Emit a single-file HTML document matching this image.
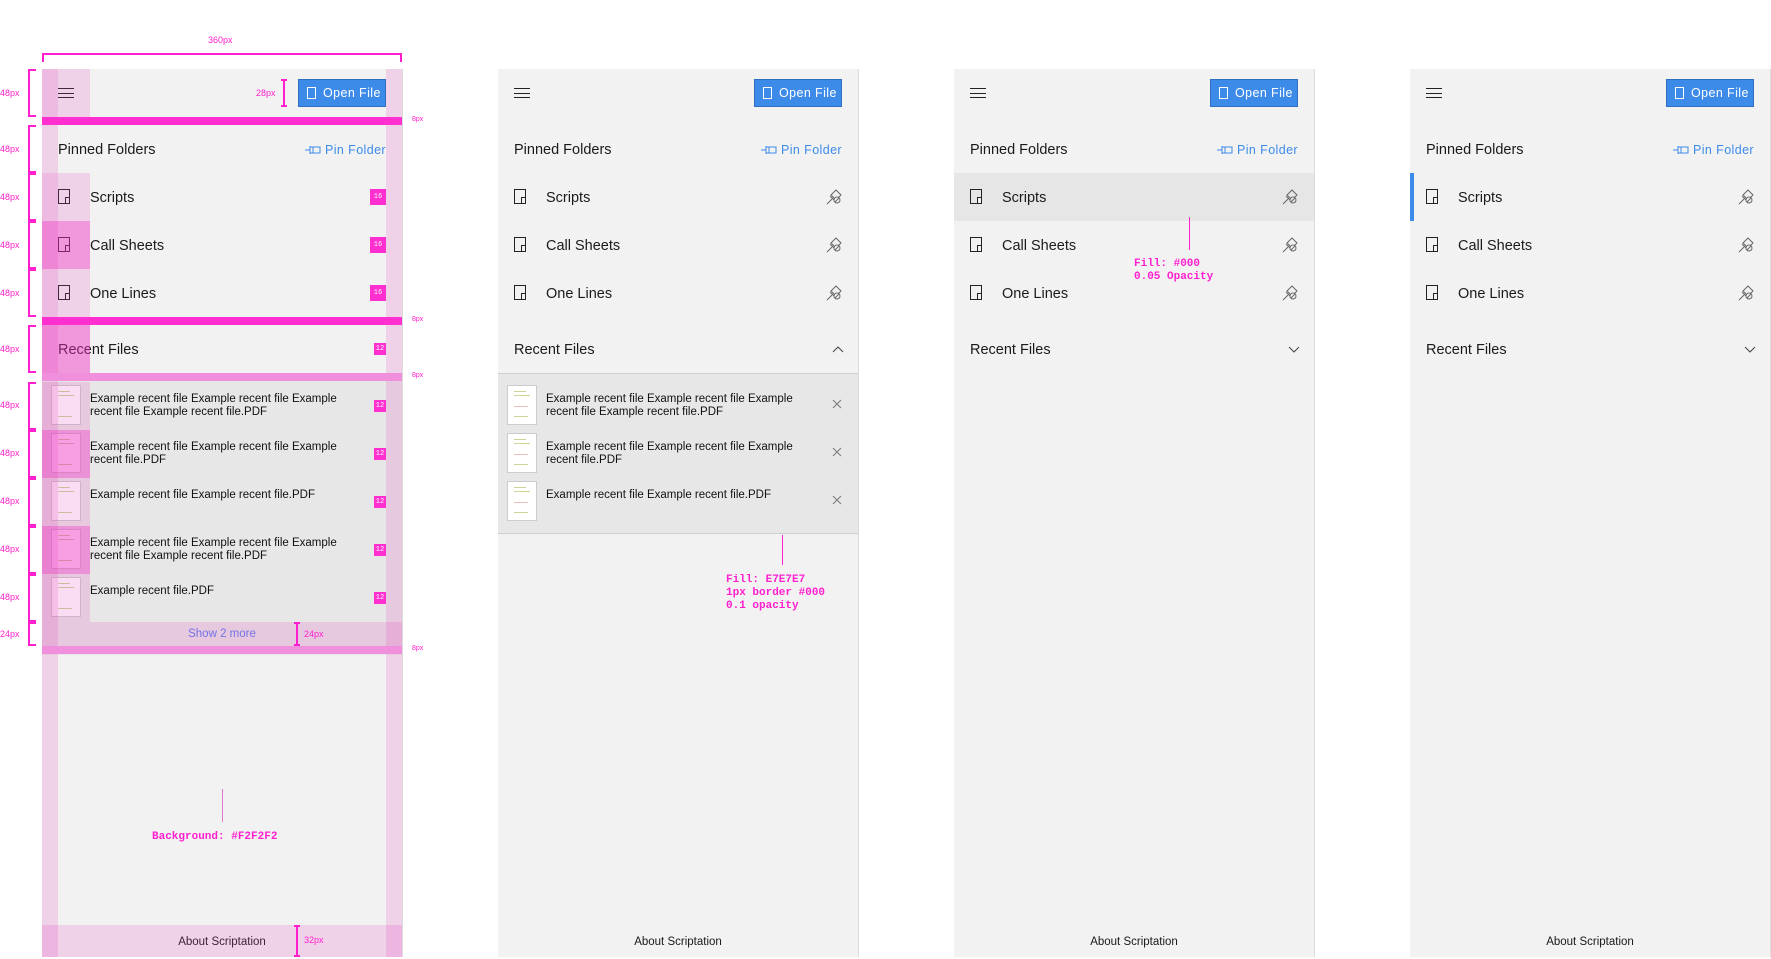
<!DOCTYPE html>
<html><head><meta charset="utf-8"><style>
*{margin:0;padding:0;box-sizing:border-box}
body{width:1771px;height:957px;background:#fff;position:relative;overflow:hidden;font-family:"Liberation Sans",sans-serif;color:#1a1a1a}
.p{position:absolute;top:69px;width:361px;height:888px;background:#f2f2f2;border-right:1px solid #dcdcdc}
.a{position:absolute}
.ham{left:16px;top:19px;width:16px;height:10px;border-top:1px solid #222;border-bottom:1px solid #222}
.ham:after{content:"";position:absolute;left:0;top:3.5px;width:16px;height:1px;background:#222}
.btn{left:256px;top:10px;width:88px;height:28px;background:#3d8be8;border:1px solid #2f6fc0;color:#fff;font-size:12.5px;letter-spacing:.4px;line-height:27px;padding-left:24px}
.btn i{position:absolute;left:8px;top:7px;width:9px;height:12px;border:1px solid #fff}
.h{left:16px;font-size:14.5px;line-height:50px}
.pin{right:16px;top:56px;line-height:50px;font-size:12.5px;color:#3d8be8;letter-spacing:.4px}
.pin svg{vertical-align:-1px;margin-right:4px}
.row{left:0;width:360px;height:48px}
.row .fi{position:absolute;left:16px;top:16px;width:12px;height:15px;border:1px solid #222}
.row .fi:after{content:"";position:absolute;right:-1px;bottom:-1px;width:3px;height:5px;border:1px solid #222;background:#f2f2f2}
.row span{position:absolute;left:48px;line-height:50px;font-size:14.5px}
.row svg{position:absolute;right:16px;top:16px}
.list{left:0;top:304px;width:360px;background:#e7e7e7;border-top:1px solid rgba(0,0,0,.1);border-bottom:1px solid rgba(0,0,0,.1)}
.fr{position:relative;height:48px}
.th{position:absolute;left:9px;top:4px;width:30px;height:40px;background:#fff;border:1px solid #ccc}
.th b{position:absolute;left:6px;height:1px;background:#c8d89a}
.fr p{position:absolute;left:48px;top:12px;width:250px;font-size:11.5px;line-height:13px;color:#111}
.fr .x{position:absolute;right:16px;top:18px}
.foot{left:0;top:856px;width:360px;height:32px;line-height:34px;text-align:center;font-size:11.5px}
.ann{position:absolute;font-family:"Liberation Mono",monospace;font-weight:bold;color:#ff1fcf;font-size:11px;line-height:13px}
.lbl{position:absolute;font-size:9px;color:#ff1fcf;}
.br{position:absolute;left:28px;width:8px;border:2px solid #ff1fcf;border-right:none}
.ov{position:absolute}
.bd{position:absolute;background:#ff2fd0;color:#fff;font-size:7px;text-align:center;font-family:"Liberation Mono",monospace}
</style></head><body>

<div class="lbl" style="left:208px;top:35px">360px</div>
<div class="ov" style="left:42px;top:53px;width:360px;height:9px;border:2px solid #ff1fcf;border-bottom:none"></div>
<div class="lbl" style="left:0;top:88px">48px</div>
<div class="lbl" style="left:0;top:144px">48px</div>
<div class="lbl" style="left:0;top:192px">48px</div>
<div class="lbl" style="left:0;top:240px">48px</div>
<div class="lbl" style="left:0;top:288px">48px</div>
<div class="lbl" style="left:0;top:344px">48px</div>
<div class="lbl" style="left:0;top:400px">48px</div>
<div class="lbl" style="left:0;top:448px">48px</div>
<div class="lbl" style="left:0;top:496px">48px</div>
<div class="lbl" style="left:0;top:544px">48px</div>
<div class="lbl" style="left:0;top:592px">48px</div>
<div class="lbl" style="left:0;top:629px">24px</div>
<div class="br" style="top:69px;height:48px"></div>
<div class="br" style="top:125px;height:48px"></div>
<div class="br" style="top:173px;height:48px"></div>
<div class="br" style="top:221px;height:48px"></div>
<div class="br" style="top:269px;height:48px"></div>
<div class="br" style="top:325px;height:48px"></div>
<div class="br" style="top:382px;height:48px"></div>
<div class="br" style="top:430px;height:48px"></div>
<div class="br" style="top:478px;height:48px"></div>
<div class="br" style="top:526px;height:48px"></div>
<div class="br" style="top:574px;height:48px"></div>
<div class="br" style="top:622px;height:24px"></div>
<div class="lbl" style="left:412px;top:116px;font-size:7px">8px</div>
<div class="lbl" style="left:412px;top:316px;font-size:7px">8px</div>
<div class="lbl" style="left:412px;top:372px;font-size:7px">8px</div>
<div class="lbl" style="left:412px;top:645px;font-size:7px">8px</div>

<!-- PANEL 1 -->
<div class="p" style="left:42px">
  <div class="a ham"></div>
  <div class="a btn"><i></i>Open File</div>
  <div class="a h" style="top:56px">Pinned Folders</div>
  <div class="a pin"><svg width="16" height="10" viewBox="0 0 16 10" fill="none" stroke="#3d8be8"><path d="M0 5h5M5 1v8M5 2h10v6H5M8 2v6"/></svg>Pin Folder</div>
  <div class="a row" style="top:104px"><i class="fi"></i><span>Scripts</span></div>
  <div class="a row" style="top:152px"><i class="fi"></i><span>Call Sheets</span></div>
  <div class="a row" style="top:200px"><i class="fi"></i><span>One Lines</span></div>
  <div class="a h" style="top:256px">Recent Files</div>
  <div class="a list" style="height:282px;border:none">
    <div style="height:8px"></div>
    <div class="fr"><div class="th"><b style="top:5px;width:12px"></b><b style="top:9px;width:16px"></b><b style="top:30px;width:14px"></b></div><p>Example recent file Example recent file Example recent file Example recent file.PDF</p></div>
    <div class="fr"><div class="th"><b style="top:5px;width:12px"></b><b style="top:9px;width:16px"></b><b style="top:30px;width:14px"></b></div><p>Example recent file Example recent file Example recent file.PDF</p></div>
    <div class="fr"><div class="th"><b style="top:5px;width:12px"></b><b style="top:9px;width:16px"></b><b style="top:30px;width:14px"></b></div><p>Example recent file Example recent file.PDF</p></div>
    <div class="fr"><div class="th"><b style="top:5px;width:12px"></b><b style="top:9px;width:16px"></b><b style="top:30px;width:14px"></b></div><p>Example recent file Example recent file Example recent file Example recent file.PDF</p></div>
    <div class="fr"><div class="th"><b style="top:5px;width:12px"></b><b style="top:9px;width:16px"></b><b style="top:30px;width:14px"></b></div><p>Example recent file.PDF</p></div>
    <div style="height:24px;line-height:26px;text-align:center;font-size:11.5px;color:#5b7ff0">Show 2 more</div>
  </div>
  <div class="a foot">About Scriptation</div>
  <div class="ov" style="left:0;top:0;width:16px;height:888px;background:rgba(230,60,190,.18)"></div>
  <div class="ov" style="left:344px;top:0;width:16px;height:888px;background:rgba(230,60,190,.18)"></div>
  <div class="ov" style="left:0;top:0;width:16px;height:48px;background:rgba(230,60,190,.15)"></div>
  <div class="ov" style="left:16px;top:0;width:32px;height:48px;background:rgba(230,60,190,.18)"></div>
  <div class="ov" style="left:0;top:104px;width:16px;height:48px;background:rgba(230,60,190,.15)"></div>
  <div class="ov" style="left:16px;top:104px;width:32px;height:48px;background:rgba(230,60,190,.18)"></div>
  <div class="ov" style="left:0;top:152px;width:48px;height:48px;background:rgba(240,40,190,.45)"></div>
  <div class="ov" style="left:0;top:200px;width:16px;height:48px;background:rgba(230,60,190,.15)"></div>
  <div class="ov" style="left:16px;top:200px;width:32px;height:48px;background:rgba(230,60,190,.18)"></div>
  <div class="ov" style="left:0;top:256px;width:48px;height:48px;background:rgba(240,40,190,.45)"></div>
  <div class="ov" style="left:0;top:313px;width:48px;height:48px;background:rgba(230,60,190,.18)"></div>
  <div class="ov" style="left:0;top:361px;width:48px;height:48px;background:rgba(240,40,190,.45)"></div>
  <div class="ov" style="left:0;top:409px;width:48px;height:48px;background:rgba(230,60,190,.18)"></div>
  <div class="ov" style="left:0;top:457px;width:48px;height:48px;background:rgba(240,40,190,.45)"></div>
  <div class="ov" style="left:0;top:505px;width:48px;height:48px;background:rgba(230,60,190,.18)"></div>
  <div class="ov" style="left:0;top:553px;width:360px;height:24px;background:rgba(230,60,190,.18)"></div>
  <div class="ov" style="left:0;top:856px;width:360px;height:32px;background:rgba(230,60,190,.18)"></div>
  <div class="ov" style="left:0;top:48px;width:360px;height:8px;background:#ff2fd0"></div>
  <div class="ov" style="left:0;top:248px;width:360px;height:8px;background:#ff2fd0"></div>
  <div class="ov" style="left:0;top:304px;width:360px;height:8px;background:#f08fdc"></div>
  <div class="ov" style="left:0;top:577px;width:360px;height:8px;background:#f08fdc"></div>
  <div class="bd" style="left:328px;top:120px;width:16px;height:16px;line-height:16px">16</div>
  <div class="bd" style="left:328px;top:168px;width:16px;height:16px;line-height:16px">16</div>
  <div class="bd" style="left:328px;top:216px;width:16px;height:16px;line-height:16px">16</div>
  <div class="bd" style="left:332px;top:274px;width:12px;height:12px;line-height:12px">12</div>
  <div class="bd" style="left:332px;top:331px;width:12px;height:12px;line-height:12px">12</div>
  <div class="bd" style="left:332px;top:379px;width:12px;height:12px;line-height:12px">12</div>
  <div class="bd" style="left:332px;top:427px;width:12px;height:12px;line-height:12px">12</div>
  <div class="bd" style="left:332px;top:475px;width:12px;height:12px;line-height:12px">12</div>
  <div class="bd" style="left:332px;top:523px;width:12px;height:12px;line-height:12px">12</div>
  <div class="ov" style="left:239px;top:10px;width:6px;height:28px;border-top:2px solid #ff1fcf;border-bottom:2px solid #ff1fcf"><div style="margin-left:2px;width:2px;height:24px;background:#ff1fcf"></div></div>
  <div class="lbl" style="left:214px;top:19px">28px</div>
  <div class="ov" style="left:252px;top:553px;width:6px;height:24px;border-top:2px solid #ff1fcf;border-bottom:2px solid #ff1fcf"><div style="margin-left:2px;width:2px;height:20px;background:#ff1fcf"></div></div>
  <div class="lbl" style="left:262px;top:560px">24px</div>
  <div class="ov" style="left:252px;top:856px;width:6px;height:32px;border-top:2px solid #ff1fcf;border-bottom:2px solid #ff1fcf"><div style="margin-left:2px;width:2px;height:28px;background:#ff1fcf"></div></div>
  <div class="lbl" style="left:262px;top:866px">32px</div>
  <div class="ov" style="left:180px;top:720px;width:1px;height:33px;background:#e07ad0"></div>
  <div class="ann" style="left:110px;top:762px">Background: #F2F2F2</div>
</div>

<!-- PANEL 2 -->
<div class="p" style="left:498px">
  <div class="a ham"></div>
  <div class="a btn"><i></i>Open File</div>
  <div class="a h" style="top:56px">Pinned Folders</div>
  <div class="a pin"><svg width="16" height="10" viewBox="0 0 16 10" fill="none" stroke="#3d8be8"><path d="M0 5h5M5 1v8M5 2h10v6H5M8 2v6"/></svg>Pin Folder</div>
  <div class="a row" style="top:104px"><i class="fi"></i><span>Scripts</span><svg width="16" height="16" viewBox="0 0 16 16" fill="none" stroke="#666" stroke-width="1"><path d="M1 15l5-5M4 7l5 5M5 6l5-5 5 5-5 5z"/><circle cx="11" cy="11" r="3" fill="#f2f2f2"/><path d="M9 13l4-4"/></svg></div>
  <div class="a row" style="top:152px"><i class="fi"></i><span>Call Sheets</span><svg width="16" height="16" viewBox="0 0 16 16" fill="none" stroke="#666" stroke-width="1"><path d="M1 15l5-5M4 7l5 5M5 6l5-5 5 5-5 5z"/><circle cx="11" cy="11" r="3" fill="#f2f2f2"/><path d="M9 13l4-4"/></svg></div>
  <div class="a row" style="top:200px"><i class="fi"></i><span>One Lines</span><svg width="16" height="16" viewBox="0 0 16 16" fill="none" stroke="#666" stroke-width="1"><path d="M1 15l5-5M4 7l5 5M5 6l5-5 5 5-5 5z"/><circle cx="11" cy="11" r="3" fill="#f2f2f2"/><path d="M9 13l4-4"/></svg></div>
  <div class="a h" style="top:256px">Recent Files</div>
  <svg class="a" style="left:334px;top:276px" width="12" height="8" viewBox="0 0 12 8" fill="none" stroke="#444"><path d="M1 7l5-5 5 5"/></svg>
  <div class="a list" style="height:161px">
    <div style="height:7px"></div>
    <div class="fr"><div class="th"><b style="top:5px;width:12px"></b><b style="top:9px;width:16px"></b><b style="top:20px;width:14px;background:#e8c0c0"></b><b style="top:30px;width:14px"></b></div><p>Example recent file Example recent file Example recent file Example recent file.PDF</p><svg class="x" width="10" height="10" stroke="#777"><path d="M1 1l8 8M9 1l-8 8"/></svg></div>
    <div class="fr"><div class="th"><b style="top:5px;width:12px"></b><b style="top:9px;width:16px"></b><b style="top:20px;width:14px;background:#e8c0c0"></b><b style="top:30px;width:14px"></b></div><p>Example recent file Example recent file Example recent file.PDF</p><svg class="x" width="10" height="10" stroke="#777"><path d="M1 1l8 8M9 1l-8 8"/></svg></div>
    <div class="fr"><div class="th"><b style="top:5px;width:12px"></b><b style="top:9px;width:16px"></b><b style="top:20px;width:14px;background:#e8c0c0"></b><b style="top:30px;width:14px"></b></div><p>Example recent file Example recent file.PDF</p><svg class="x" width="10" height="10" stroke="#777"><path d="M1 1l8 8M9 1l-8 8"/></svg></div>
  </div>
  <div class="ov" style="left:284px;top:466px;width:1px;height:30px;background:#ff1fcf"></div>
  <div class="ann" style="left:228px;top:505px">Fill: E7E7E7<br>1px border #000<br>0.1 opacity</div>
  <div class="a foot">About Scriptation</div>
</div>

<!-- PANEL 3 -->
<div class="p" style="left:954px">
  <div class="a ham"></div>
  <div class="a btn"><i></i>Open File</div>
  <div class="a h" style="top:56px">Pinned Folders</div>
  <div class="a pin"><svg width="16" height="10" viewBox="0 0 16 10" fill="none" stroke="#3d8be8"><path d="M0 5h5M5 1v8M5 2h10v6H5M8 2v6"/></svg>Pin Folder</div>
  <div class="a row" style="top:104px;background:#e6e6e6"><i class="fi"></i><span>Scripts</span><svg width="16" height="16" viewBox="0 0 16 16" fill="none" stroke="#666"><path d="M1 15l5-5M4 7l5 5M5 6l5-5 5 5-5 5z"/><circle cx="11" cy="11" r="3" fill="#e6e6e6"/><path d="M9 13l4-4"/></svg></div>
  <div class="a row" style="top:152px"><i class="fi"></i><span>Call Sheets</span><svg width="16" height="16" viewBox="0 0 16 16" fill="none" stroke="#666"><path d="M1 15l5-5M4 7l5 5M5 6l5-5 5 5-5 5z"/><circle cx="11" cy="11" r="3" fill="#f2f2f2"/><path d="M9 13l4-4"/></svg></div>
  <div class="a row" style="top:200px"><i class="fi"></i><span>One Lines</span><svg width="16" height="16" viewBox="0 0 16 16" fill="none" stroke="#666"><path d="M1 15l5-5M4 7l5 5M5 6l5-5 5 5-5 5z"/><circle cx="11" cy="11" r="3" fill="#f2f2f2"/><path d="M9 13l4-4"/></svg></div>
  <div class="a h" style="top:256px">Recent Files</div>
  <svg class="a" style="left:334px;top:277px" width="12" height="8" viewBox="0 0 12 8" fill="none" stroke="#444"><path d="M1 1l5 5 5-5"/></svg>
  <div class="ov" style="left:235px;top:148px;width:1px;height:33px;background:#ff1fcf"></div>
  <div class="ann" style="left:180px;top:189px">Fill: #000<br>0.05 Opacity</div>
  <div class="a foot">About Scriptation</div>
</div>

<!-- PANEL 4 -->
<div class="p" style="left:1410px">
  <div class="a ham"></div>
  <div class="a btn"><i></i>Open File</div>
  <div class="a h" style="top:56px">Pinned Folders</div>
  <div class="a pin"><svg width="16" height="10" viewBox="0 0 16 10" fill="none" stroke="#3d8be8"><path d="M0 5h5M5 1v8M5 2h10v6H5M8 2v6"/></svg>Pin Folder</div>
  <div class="a row" style="top:104px"><div style="position:absolute;left:0;top:0;width:4px;height:48px;background:#3d8be8"></div><i class="fi"></i><span>Scripts</span><svg width="16" height="16" viewBox="0 0 16 16" fill="none" stroke="#666"><path d="M1 15l5-5M4 7l5 5M5 6l5-5 5 5-5 5z"/><circle cx="11" cy="11" r="3" fill="#f2f2f2"/><path d="M9 13l4-4"/></svg></div>
  <div class="a row" style="top:152px"><i class="fi"></i><span>Call Sheets</span><svg width="16" height="16" viewBox="0 0 16 16" fill="none" stroke="#666"><path d="M1 15l5-5M4 7l5 5M5 6l5-5 5 5-5 5z"/><circle cx="11" cy="11" r="3" fill="#f2f2f2"/><path d="M9 13l4-4"/></svg></div>
  <div class="a row" style="top:200px"><i class="fi"></i><span>One Lines</span><svg width="16" height="16" viewBox="0 0 16 16" fill="none" stroke="#666"><path d="M1 15l5-5M4 7l5 5M5 6l5-5 5 5-5 5z"/><circle cx="11" cy="11" r="3" fill="#f2f2f2"/><path d="M9 13l4-4"/></svg></div>
  <div class="a h" style="top:256px">Recent Files</div>
  <svg class="a" style="left:334px;top:277px" width="12" height="8" viewBox="0 0 12 8" fill="none" stroke="#444"><path d="M1 1l5 5 5-5"/></svg>
  <div class="a foot">About Scriptation</div>
</div>
</body></html>
